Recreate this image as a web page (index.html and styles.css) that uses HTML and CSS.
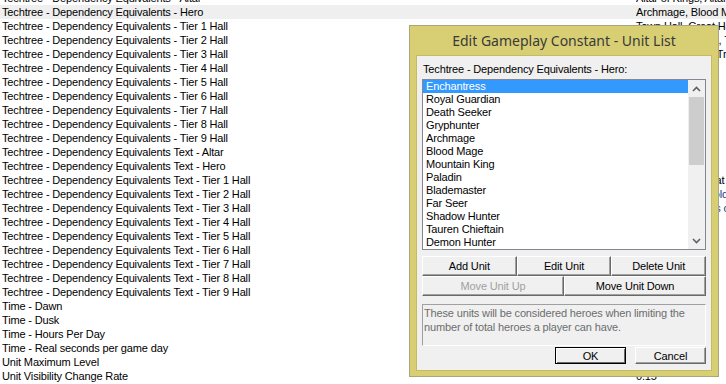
FILE: index.html
```html
<!DOCTYPE html>
<html lang="en">
  <head>
    <meta charset="UTF-8" />
    <title>Gameplay Constants</title>
    <link rel="stylesheet" href="styles.css">
  </head>
  <body>
    <div class="table">
      <div class="row"><span class="name">Techtree - Dependency Equivalents - Altar</span><span class="value">Altar of Kings, Altar of Darkness, Altar of Storms, Altar of Elders</span></div>
      <div class="row hover"><span class="name">Techtree - Dependency Equivalents - Hero</span><span class="value">Archmage, Blood Mage, Mountain King, Paladin</span></div>
      <div class="row"><span class="name">Techtree - Dependency Equivalents - Tier 1 Hall</span><span class="value">Town Hall, Great Hall, Tree of Life, Necropolis</span></div>
      <div class="row"><span class="name">Techtree - Dependency Equivalents - Tier 2 Hall</span><span class="value">Keep, Stronghold, Tree of Ages, Halls, T</span></div>
      <div class="row"><span class="name">Techtree - Dependency Equivalents - Tier 3 Hall</span><span class="value">Castle, Fortress, Tree of Eternity, Black :</span></div>
      <div class="row"><span class="name">Techtree - Dependency Equivalents - Tier 4 Hall</span><span class="value"></span></div>
      <div class="row"><span class="name">Techtree - Dependency Equivalents - Tier 5 Hall</span><span class="value"></span></div>
      <div class="row"><span class="name">Techtree - Dependency Equivalents - Tier 6 Hall</span><span class="value"></span></div>
      <div class="row"><span class="name">Techtree - Dependency Equivalents - Tier 7 Hall</span><span class="value"></span></div>
      <div class="row"><span class="name">Techtree - Dependency Equivalents - Tier 8 Hall</span><span class="value"></span></div>
      <div class="row"><span class="name">Techtree - Dependency Equivalents - Tier 9 Hall</span><span class="value"></span></div>
      <div class="row"><span class="name">Techtree - Dependency Equivalents Text - Altar</span><span class="value"></span></div>
      <div class="row"><span class="name">Techtree - Dependency Equivalents Text - Hero</span><span class="value"></span></div>
      <div class="row"><span class="name">Techtree - Dependency Equivalents Text - Tier 1 Hall</span><span class="value">Town Hall or Great Hall or Tree of Life or Necropolis at</span></div>
      <div class="row"><span class="name">Techtree - Dependency Equivalents Text - Tier 2 Hall</span><span class="value link">Keep or Stronghold or Tree of Ages or Halls of ld</span></div>
      <div class="row"><span class="name">Techtree - Dependency Equivalents Text - Tier 3 Hall</span><span class="value link">Castle or Fortress or Tree of Eternity or Black Cit o</span></div>
      <div class="row"><span class="name">Techtree - Dependency Equivalents Text - Tier 4 Hall</span><span class="value"></span></div>
      <div class="row"><span class="name">Techtree - Dependency Equivalents Text - Tier 5 Hall</span><span class="value"></span></div>
      <div class="row"><span class="name">Techtree - Dependency Equivalents Text - Tier 6 Hall</span><span class="value"></span></div>
      <div class="row"><span class="name">Techtree - Dependency Equivalents Text - Tier 7 Hall</span><span class="value"></span></div>
      <div class="row"><span class="name">Techtree - Dependency Equivalents Text - Tier 8 Hall</span><span class="value"></span></div>
      <div class="row"><span class="name">Techtree - Dependency Equivalents Text - Tier 9 Hall</span><span class="value"></span></div>
      <div class="row"><span class="name">Time - Dawn</span><span class="value"></span></div>
      <div class="row"><span class="name">Time - Dusk</span><span class="value"></span></div>
      <div class="row"><span class="name">Time - Hours Per Day</span><span class="value"></span></div>
      <div class="row"><span class="name">Time - Real seconds per game day</span><span class="value"></span></div>
      <div class="row"><span class="name">Unit Maximum Level</span><span class="value"></span></div>
      <div class="row"><span class="name">Unit Visibility Change Rate</span><span class="value">0.15</span></div>
    </div>

    <div class="dialog">
      <div class="title">Edit Gameplay Constant - Unit List</div>
      <div class="client">
        <div class="label">Techtree - Dependency Equivalents - Hero:</div>
        <div class="listbox">
          <div class="items">
            <div class="item selected">Enchantress</div>
            <div class="item">Royal Guardian</div>
            <div class="item">Death Seeker</div>
            <div class="item">Gryphunter</div>
            <div class="item">Archmage</div>
            <div class="item">Blood Mage</div>
            <div class="item">Mountain King</div>
            <div class="item">Paladin</div>
            <div class="item">Blademaster</div>
            <div class="item">Far Seer</div>
            <div class="item">Shadow Hunter</div>
            <div class="item">Tauren Chieftain</div>
            <div class="item">Demon Hunter</div>
          </div>
          <div class="scrollbar">
            <div class="arrow">
              <svg width="9" height="6" viewBox="0 0 9 6"><path d="M1 5 L4.5 1.5 L8 5" fill="none" stroke="#606060" stroke-width="1.6"/></svg>
            </div>
            <div class="track"><div class="thumb"></div></div>
            <div class="arrow">
              <svg width="9" height="6" viewBox="0 0 9 6"><path d="M1 1 L4.5 4.5 L8 1" fill="none" stroke="#606060" stroke-width="1.6"/></svg>
            </div>
          </div>
        </div>

        <div class="btn-row three">
          <button>Add Unit</button>
          <button>Edit Unit</button>
          <button>Delete Unit</button>
        </div>
        <div class="btn-row two">
          <button disabled>Move Unit Up</button>
          <button>Move Unit Down</button>
        </div>

        <div class="description">These units will be considered heroes when limiting the number of total heroes a player can have.</div>

        <div class="footer">
          <button class="default">OK</button>
          <button>Cancel</button>
        </div>
      </div>
    </div>
  </body>
</html>
```

FILE: styles.css
```css
body {
  margin: 0;
  width: 726px;
  height: 384px;
  overflow: hidden;
  background-color: #ffffff;
  font-family: "Liberation Sans", Arial, sans-serif;
  font-size: 11px;
  letter-spacing: -0.15px;
  color: #000000;
  position: relative;
}

.table {
  margin-top: -9px;
}

.row {
  display: flex;
  height: 14px;
  line-height: 14px;
  white-space: nowrap;
}

.row.hover {
  background-color: #efefef;
}

.name {
  width: 634px;
  padding-left: 2px;
  flex-shrink: 0;
}

.value {
  overflow: hidden;
}

.value.link {
  color: #1a3e8c;
}

/* dialog window */
.dialog {
  position: absolute;
  left: 409px;
  top: 25px;
  width: 310px;
  height: 352px;
  box-sizing: border-box;
  border: 1px solid #a9a57f;
  background-color: #d8cf74;
  padding: 0 6px 5px 6px;
  display: flex;
  flex-direction: column;
}

.title {
  height: 29px;
  display: flex;
  align-items: center;
  justify-content: center;
  font-family: "Noto Sans", "Open Sans", sans-serif;
  font-size: 14px;
  letter-spacing: 0;
  color: #3a3a3a;
}

.client {
  flex: 1;
  box-sizing: border-box;
  border: 1px solid #c4bb62;
  background-color: #f0f0f0;
  padding: 7px 5px 0 5px;
  display: flex;
  flex-direction: column;
}

.label {
  line-height: 13px;
  height: 13px;
  padding-left: 1px;
}

.listbox {
  margin-top: 3px;
  height: 171px;
  box-sizing: border-box;
  border: 1px solid #828790;
  background-color: #ffffff;
  display: flex;
}

.items {
  flex: 1;
}

.item {
  height: 13px;
  line-height: 13px;
  padding-left: 3px;
  white-space: nowrap;
}

.item.selected {
  background-color: #3399ff;
  color: #ffffff;
}

.scrollbar {
  width: 17px;
  background-color: #f0f0f0;
  display: flex;
  flex-direction: column;
}

.arrow {
  height: 17px;
  display: flex;
  align-items: center;
  justify-content: center;
}

.track {
  flex: 1;
}

.thumb {
  margin: 0 1px;
  height: 68px;
  background-color: #cdcdcd;
}

button {
  font-family: "Liberation Sans", Arial, sans-serif;
  font-size: 11px;
  letter-spacing: -0.15px;
  color: #000000;
  background-color: #f0f0f0;
  border: 1px solid;
  border-color: #ffffff #696969 #696969 #ffffff;
  box-shadow: inset -1px -1px 0 #a0a0a0;
  padding: 0;
  margin: 0;
  height: 20px;
}

button:disabled {
  color: #a0a0a0;
}

.btn-row {
  display: flex;
}

.btn-row button {
  flex: 1;
}

.btn-row.three {
  margin-top: 6px;
}

.description {
  margin-top: 8px;
  height: 42px;
  box-sizing: border-box;
  border: 1px solid;
  border-color: #a0a0a0 #ffffff #ffffff #a0a0a0;
  color: #6d6d6d;
  line-height: 14px;
  padding: 1px 0 0 1px;
}

.footer {
  margin-top: 1px;
  display: flex;
  justify-content: flex-end;
  gap: 9px;
}

.footer button {
  width: 71px;
  height: 17px;
}

.footer button.default {
  border-color: #000000;
  box-shadow: inset 1px 1px 0 #ffffff, inset -1px -1px 0 #696969;
}
```
